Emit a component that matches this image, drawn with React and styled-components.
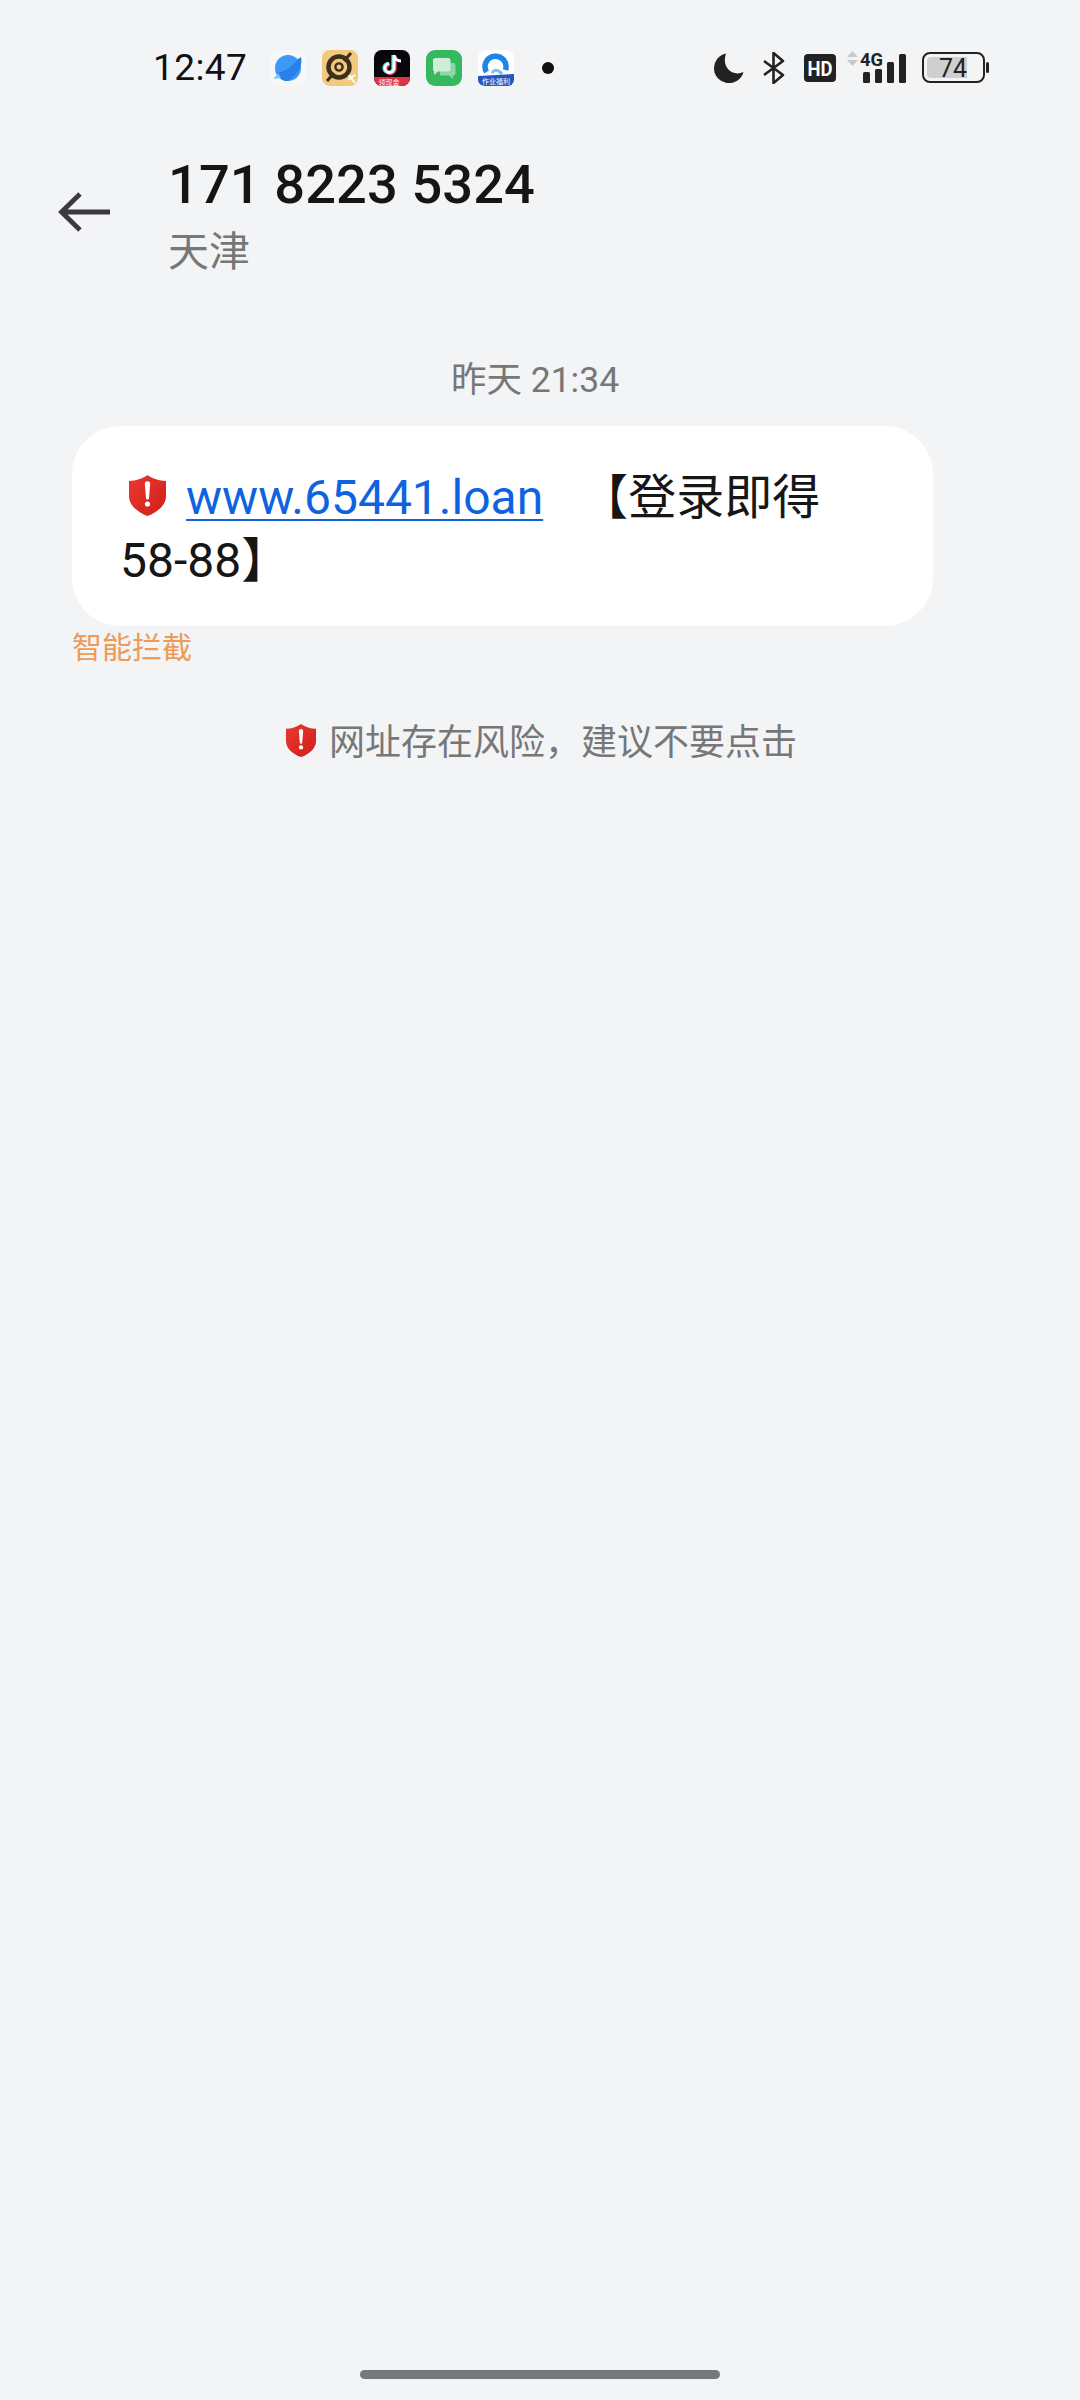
import React from "react";
import styled, { createGlobalStyle } from "styled-components";

const Global = createGlobalStyle`
  html, body { margin: 0; padding: 0; background: #f2f4f6; }
  body { font-family: Roboto, "Noto Sans CJK SC", sans-serif; }
`;
const Page = styled.div`
  width: 1080px; height: 2400px; background: #f2f4f6; display: flex; flex-direction: column;
  overflow: hidden;
`;
const StatusBar = styled.div`
  height: 136px; box-sizing: border-box; padding: 0 91px 0 153px; display: flex; align-items: center;
  flex-shrink: 0;
`;
const Time = styled.div`
  font-size: 37px; line-height: 44px; color: #111; width: 117px; letter-spacing: 0.4px;
`;
const NotifIcons = styled.div`display: flex; align-items: center; gap: 16px;`;
const Dot = styled.div`width: 12px; height: 12px; border-radius: 50%; background: #111; margin-left: 28px;`;
const SysIcons = styled.div`margin-left: auto; display: flex; align-items: center;`;
const Header = styled.div`display: flex; align-items: flex-start; padding-left: 58px; height: 188px; flex-shrink: 0;`;
const Back = styled.div`width: 110px; padding-top: 55px; flex-shrink: 0; line-height: 0;`;
const Titles = styled.div`display: flex; flex-direction: column; padding-top: 17px;`;
const Title = styled.div`font-size: 54.2px; font-weight: 500; line-height: 64px; color: #151515; letter-spacing: 0.1px;`;
const Sub = styled.div`font-size: 41px; line-height: 54px; color: #777; margin-top: 8px;`;
const Stamp = styled.div`
  font-size: 35.5px; line-height: 46px; color: #777; text-align: center; width: 1070px; margin: 33px 0 0;
`;
const Bubble = styled.div`
  margin: 23px 0 0 72px; width: 861px; height: 200px; box-sizing: border-box; background: #fff;
  border-radius: 48px; padding: 40px 60px 0 50px; font-size: 48px; line-height: 63px; color: #161616;
`;
const BubbleLine = styled.div`display: flex; align-items: center; height: 63px; white-space: nowrap;`;
const SecondLine = styled(BubbleLine)`margin-left: -2px;`;
const ShieldGap = styled.span`width: 7px; flex-shrink: 0;`;
const Link = styled.span`color: #0f63e0; text-decoration: underline; text-decoration-thickness: 2px; text-underline-offset: 5px; margin-left: 20px; margin-right: 37px;`;
const Blocked = styled.div`font-size: 30px; line-height: 40px; color: #ee9a55; margin: 2px 0 0 72px;`;
const Warning = styled.div`
  display: flex; justify-content: center; align-items: center; margin: 50px 0 0 0; width: 1083px; gap: 13px;
  font-size: 36px; line-height: 50px; color: #777;
`;
const Spacer = styled.div`flex: 1;`;
const HomeBar = styled.div`width: 360px; height: 9px; border-radius: 4.5px; background: #77787a; margin: 0 0 21px 360px;`;
const ShieldSvg = styled.svg`flex-shrink: 0; margin-bottom: ${(p) => p.$lift}px;`;

const Shield = ({ id, w, h, lift }) => (
  <ShieldSvg width={w} height={h} viewBox="0 0 37 41" $lift={lift}>
    <defs>
      <linearGradient id={id} x1="0" y1="0" x2="1" y2="1">
        <stop offset="0" stopColor="#e9392f" />
        <stop offset="1" stopColor="#cf1f1a" />
      </linearGradient>
    </defs>
    <path d="M18.5 0 C24 4 30 5.5 37 6 V21 C37 30 29 37 18.5 41 C8 37 0 30 0 21 V6 C7 5.5 13 4 18.5 0Z" fill={`url(#${id})`} />
    <path d="M15.8 9 A2.7 2.7 0 0 1 21.2 9 L20 23 A1.5 1.5 0 0 1 17 23Z" fill="#fff" />
    <circle cx="18.5" cy="29" r="2.6" fill="#fff" />
  </ShieldSvg>
);

const AppIcon = ({ children }) => (
  <svg width="36" height="36" viewBox="0 0 36 36">{children}</svg>
);

const Browser = () => (
  <AppIcon>
    <rect width="36" height="36" rx="9" fill="#f5f7f9" />
    <circle cx="18" cy="18" r="13" fill="#3b9af8" />
    <path d="M6 23 C15 22 24 15 28 9 L31 7 C33 13 29 25 18 31 C13 31.5 8.5 28 6 23Z" fill="#2a7fe8" />
    <path d="M3.5 29 L8 23 L11 28Z" fill="#7dc3f7" />
  </AppIcon>
);
const Game = () => (
  <AppIcon>
    <rect width="36" height="36" rx="8" fill="#f2c97d" />
    <circle cx="17" cy="17" r="10.5" fill="none" stroke="#3d2f1e" strokeWidth="4.5" />
    <circle cx="17" cy="17" r="3.6" fill="none" stroke="#3d2f1e" strokeWidth="2.4" />
    <path d="M29 3 L22 11 M5 31 L12 23" stroke="#3d2f1e" strokeWidth="3" />
    <path d="M26 30 L33 25 M27 25 L33 33" stroke="#fff" strokeWidth="2" />
  </AppIcon>
);
const TikTok = () => (
  <AppIcon>
    <rect width="36" height="36" rx="8" fill="#08080c" />
    <path d="M0 27 H36 V28 A8 8 0 0 1 28 36 H8 A8 8 0 0 1 0 28Z" fill="#d93546" />
    <path d="M20 5 V18 A4.5 4.5 0 1 1 15 13.5" fill="none" stroke="#27e5ea" strokeWidth="3.4" transform="translate(-1 0)" />
    <path d="M20 5 V18 A4.5 4.5 0 1 1 15 13.5" fill="none" stroke="#f5345a" strokeWidth="3.4" transform="translate(1 1)" />
    <path d="M20 5 V18 A4.5 4.5 0 1 1 15 13.5 M20 5 C21 9 24 11 27 11" fill="none" stroke="#fff" strokeWidth="3" />
    <text x="15" y="34.5" fontSize="7" fill="#fff" textAnchor="middle" fontFamily="Noto Sans CJK SC">领现金</text>
  </AppIcon>
);
const Messages = () => (
  <AppIcon>
    <rect width="36" height="36" rx="9" fill="#35b95f" />
    <path d="M14 13 H27 A2.5 2.5 0 0 1 29.5 15.5 V23 A2.5 2.5 0 0 1 27 25.5 V29 L23 25.5 H14Z" fill="#8ed6a6" />
    <path d="M9.5 8 H22 A2.5 2.5 0 0 1 24.5 10.5 V19 A2.5 2.5 0 0 1 22 21.5 H12 L8 25 V21.3 A2.5 2.5 0 0 1 7 19 V10.5 A2.5 2.5 0 0 1 9.5 8Z" fill="#cfeeda" />
  </AppIcon>
);
const Search = () => (
  <AppIcon>
    <rect width="36" height="36" rx="8" fill="#fff" />
    <path d="M8.5 22 A10.5 10.5 0 1 1 27.5 20" fill="none" stroke="#1f84ea" strokeWidth="5.5" />
    <path d="M14 23 Q18 17 24 24" fill="none" stroke="#6fc6f5" strokeWidth="3" />
    <path d="M0 26 L36 24 V30 A7 6 0 0 1 29 36 H7 A7 6 0 0 1 0 30Z" fill="#2458bf" />
    <text x="18" y="34" fontSize="7" fill="#fff" textAnchor="middle" fontFamily="Noto Sans CJK SC">作业福利</text>
  </AppIcon>
);

const Moon = () => (
  <svg width="30" height="30" viewBox="0 0 30 30">
    <path d="M12 0.5 A15 15 0 1 0 29.5 19 C19 24 7 15 12 0.5Z" fill="#222" />
  </svg>
);
const Bluetooth = () => (
  <svg width="22" height="32" viewBox="0 0 22 32" style={{ marginLeft: 19 }}>
    <path d="M1 9 L20 23 L10.5 31 V1 L20 9 L1 23" fill="none" stroke="#222" strokeWidth="2.6" strokeLinejoin="round" />
  </svg>
);
const Hd = () => (
  <svg width="32" height="28" viewBox="0 0 32 28" style={{ marginLeft: 19 }}>
    <rect width="32" height="28" rx="4" fill="#222" />
    <text x="16" y="21.5" fontSize="21" fontWeight="700" fill="#fff" textAnchor="middle" fontFamily="Roboto" textLength="25" lengthAdjust="spacingAndGlyphs">HD</text>
  </svg>
);
const Signal = () => (
  <svg width="63" height="34" viewBox="0 0 63 34" style={{ marginLeft: 11 }}>
    <path d="M0 6 L5.5 0 L11 6Z M0 9 H11 L5.5 15Z" fill="#c9c9c9" />
    <text x="13" y="15" fontSize="18" fontWeight="700" fill="#222" fontFamily="Roboto" textLength="23" lengthAdjust="spacingAndGlyphs">4G</text>
    <rect x="16" y="21" width="7" height="11" rx="1.5" fill="#222" />
    <rect x="28" y="18" width="7" height="14" rx="1.5" fill="#222" />
    <rect x="40" y="11" width="7" height="21" rx="1.5" fill="#222" />
    <rect x="52" y="3" width="7" height="29" rx="1.5" fill="#222" />
  </svg>
);
const Battery = () => (
  <svg width="67" height="32" viewBox="0 0 67 32" style={{ marginLeft: 12 }}>
    <rect x="1" y="1" width="61" height="29" rx="7" fill="none" stroke="#222" strokeWidth="2" />
    <path d="M9 5 H45 V26 H9 A4 4 0 0 1 5 22 V9 A4 4 0 0 1 9 5Z" fill="#cfcfcf" />
    <rect x="64" y="10" width="3" height="11" rx="1.5" fill="#222" />
    <text x="31" y="24.5" fontSize="25" fill="#222" textAnchor="middle" fontFamily="Roboto">74</text>
  </svg>
);

export default function App() {
  return (
    <Page>
      <Global />
      <StatusBar>
        <Time>12:47</Time>
        <NotifIcons>
          <Browser /><Game /><TikTok /><Messages /><Search />
        </NotifIcons>
        <Dot />
        <SysIcons>
          <Moon /><Bluetooth /><Hd /><Signal /><Battery />
        </SysIcons>
      </StatusBar>
      <Header>
        <Back>
          <svg width="52" height="42" viewBox="0 0 52 42">
            <path d="M52 21 H4 M22 3 L3.5 21 L22 39" fill="none" stroke="#3a3a3c" strokeWidth="4.8" />
          </svg>
        </Back>
        <Titles>
          <Title>171 8223 5324</Title>
          <Sub>天津</Sub>
        </Titles>
      </Header>
      <Stamp>昨天 21:34</Stamp>
      <Bubble>
        <BubbleLine>
          <ShieldGap />
          <Shield id="bubble-shield" w={37} h={43} lift={4} />
          <Link>www.65441.loan</Link>
          <span>【登录即得</span>
        </BubbleLine>
        <SecondLine>58-88】</SecondLine>
      </Bubble>
      <Blocked>智能拦截</Blocked>
      <Warning>
        <Shield id="warn-shield" w={30} h={35} lift={6} />
        <span>网址存在风险，建议不要点击</span>
      </Warning>
      <Spacer />
      <HomeBar />
    </Page>
  );
}
